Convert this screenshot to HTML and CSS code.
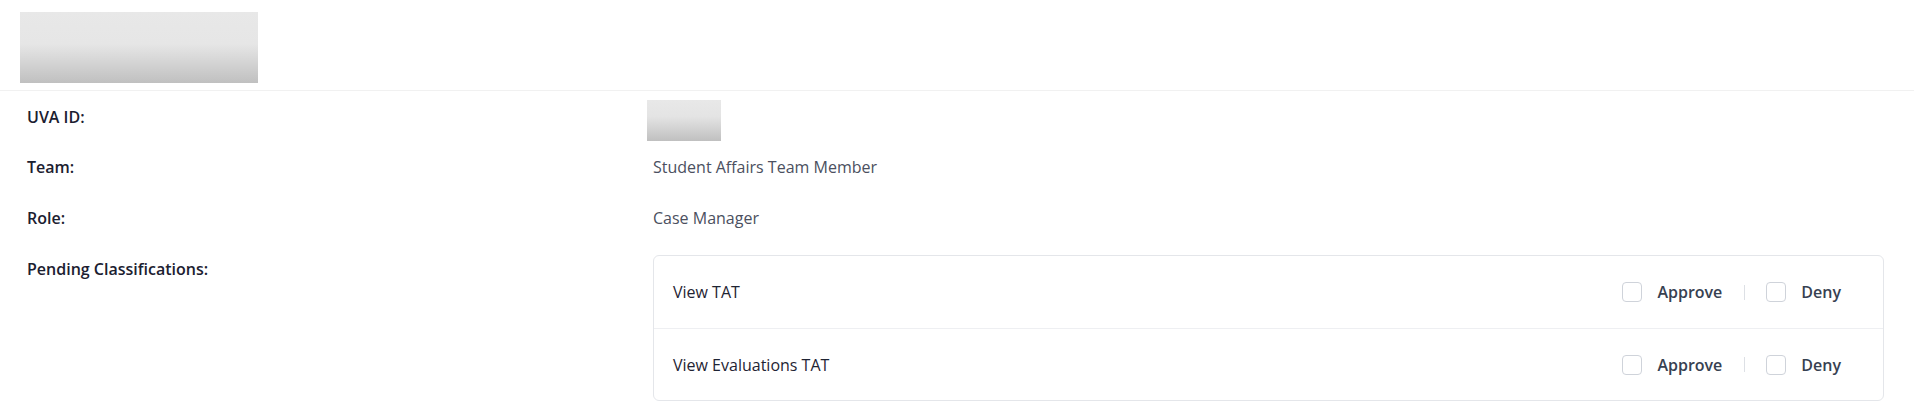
FILE: index.html
```html
<!DOCTYPE html>
<html lang="en">
<head>
<meta charset="utf-8">
<title>User Details</title>
<link rel="stylesheet" href="styles.css">
</head>
<body>
<header class="header">
  <div class="logo"></div>
</header>
<main class="details">
  <div class="row row-id">
    <div class="label">UVA ID:</div>
    <div class="value"><div class="id-block"></div></div>
  </div>
  <div class="row row-text">
    <div class="label">Team:</div>
    <div class="value">Student Affairs Team Member</div>
  </div>
  <div class="row row-text">
    <div class="label">Role:</div>
    <div class="value">Case Manager</div>
  </div>
  <div class="row row-pending">
    <div class="label">Pending Classifications:</div>
    <div class="card">
      <div class="item">
        <span class="item-name">View TAT</span>
        <div class="actions">
          <label class="choice"><span class="box"></span><span class="choice-text">Approve</span></label>
          <span class="sep"></span>
          <label class="choice"><span class="box"></span><span class="choice-text">Deny</span></label>
        </div>
      </div>
      <div class="item">
        <span class="item-name">View Evaluations TAT</span>
        <div class="actions">
          <label class="choice"><span class="box"></span><span class="choice-text">Approve</span></label>
          <span class="sep"></span>
          <label class="choice"><span class="box"></span><span class="choice-text">Deny</span></label>
        </div>
      </div>
    </div>
  </div>
</main>
</body>
</html>
```
FILE: styles.css
```css
* { box-sizing: border-box; }
html, body {
  margin: 0;
  padding: 0;
  background: #ffffff;
  font-family: "Open Sans", "Noto Sans", sans-serif;
  font-size: 16px;
  line-height: 20px;
}
.header {
  height: 91px;
  padding: 12px 20px 0;
  border-bottom: 1px solid #f1f1f1;
}
.logo {
  width: 238px;
  height: 71px;
  background: linear-gradient(#e8e8e8 0%, #e6e6e6 45%, #c0c0c0 100%);
}
.details {
  padding: 0 30px 0 27px;
}
.row {
  display: grid;
  grid-template-columns: 626px 1fr;
}
.label {
  font-weight: 600;
  color: #1b2030;
}
.value {
  color: #4b5060;
}
.row-id {
  padding: 9px 0 4px;
  align-items: start;
}
.row-id .label { padding-top: 7px; }
.id-block {
  width: 74px;
  height: 41px;
  margin-left: -6px;
  background: linear-gradient(#e8e8e8 0%, #e4e4e4 40%, #c0c0c0 100%);
}
.row-text {
  min-height: 51px;
  padding-top: 12px;
  align-items: start;
}
.row-pending {
  padding-top: 8px;
  align-items: start;
}
.row-pending .label { padding-top: 4px; }
.card {
  border: 1px solid #e4e6ea;
  border-radius: 6px;
}
.item {
  height: 72px;
  display: flex;
  align-items: center;
  justify-content: space-between;
  padding: 0 42px 0 19px;
  color: #1f2433;
}
.item + .item { border-top: 1px solid #eeeff2; }
.actions {
  display: flex;
  align-items: center;
}
.choice {
  display: flex;
  align-items: center;
  gap: 15px;
}
.box {
  width: 20px;
  height: 20px;
  border: 1px solid #cfd3da;
  border-radius: 4px;
  background: #fff;
}
.choice-text {
  font-weight: 600;
  color: #374151;
}
.sep {
  width: 1px;
  height: 15px;
  background: #dde0e5;
  margin: 0 21px 0 22px;
}
```
